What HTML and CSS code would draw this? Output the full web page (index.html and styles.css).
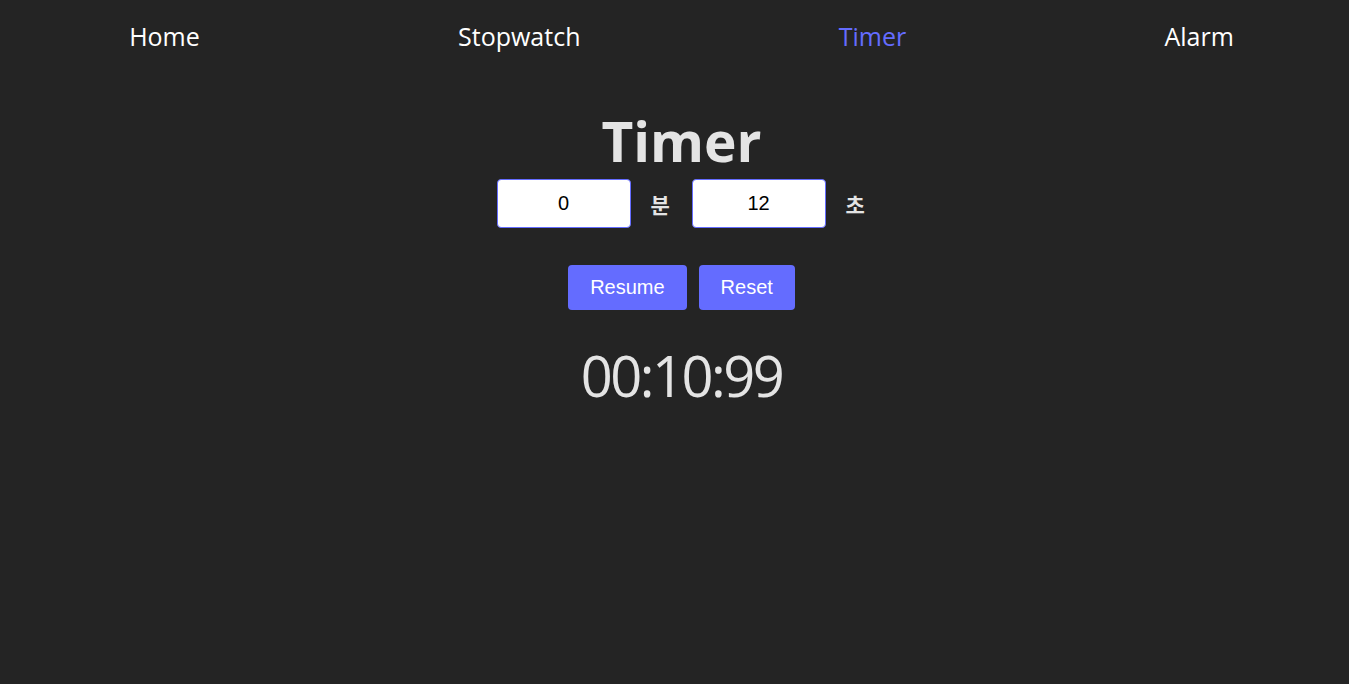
FILE: index.html
```html
<!DOCTYPE html>
<html lang="ko">
<head>
<meta charset="utf-8">
<title>Timer</title>
<link rel="stylesheet" href="styles.css">
</head>
<body>
<div class="page">
  <nav class="nav">
    <a class="nav-link" href="#">Home</a>
    <a class="nav-link" href="#">Stopwatch</a>
    <a class="nav-link active" href="#">Timer</a>
    <a class="nav-link" href="#">Alarm</a>
  </nav>
  <main class="main">
    <h1 class="title">Timer</h1>
    <div class="inputs">
      <input class="field" type="text" value="0">
      <span class="unit">분</span>
      <input class="field" type="text" value="12">
      <span class="unit">초</span>
    </div>
    <div class="buttons">
      <button class="btn">Resume</button>
      <button class="btn">Reset</button>
    </div>
    <div class="time">00:10:99</div>
  </main>
</div>
</body>
</html>
```
FILE: styles.css
```css
html, body {
  margin: 0;
  padding: 0;
  background: #242424;
  overflow: hidden;
}
body {
  font-family: "Open Sans", "Noto Sans", "Noto Sans CJK KR", sans-serif;
  color: #e4e4e4;
}
.page {
  width: 1363px;
}
.nav {
  display: flex;
  justify-content: space-around;
  padding-top: 18px;
  height: 54px;
}
.nav-link {
  color: #ffffff;
  text-decoration: none;
  font-size: 25px;
  line-height: 36px;
}
.nav-link.active {
  color: #646cff;
}
.main {
  display: flex;
  flex-direction: column;
  align-items: center;
}
.title {
  margin: 36px 0 0;
  font-size: 55px;
  font-weight: 700;
  line-height: 66px;
  color: #e4e4e4;
}
.inputs {
  display: flex;
  align-items: center;
  gap: 20px;
  margin-top: 5px;
}
.field {
  box-sizing: border-box;
  width: 134px;
  height: 49px;
  border: 1px solid #646cff;
  border-radius: 4px;
  background: #ffffff;
  color: #000000;
  text-align: center;
  font-family: "Liberation Sans", Arial, sans-serif;
  font-size: 20px;
  padding: 0;
}
.unit {
  font-family: "Noto Sans CJK KR", sans-serif;
  font-weight: 700;
  font-size: 21px;
  color: #e4e4e4;
  width: 21px;
}
.buttons {
  display: flex;
  gap: 12px;
  margin-top: 37px;
}
.btn {
  height: 45px;
  padding: 0 22px;
  border: none;
  border-radius: 4px;
  background: #646cff;
  color: #ffffff;
  font-family: "Liberation Sans", Arial, sans-serif;
  font-size: 20px;
}
.time {
  margin-top: 27px;
  font-size: 56px;
  letter-spacing: -2.5px;
  line-height: 76px;
  color: #e4e4e4;
}
```
